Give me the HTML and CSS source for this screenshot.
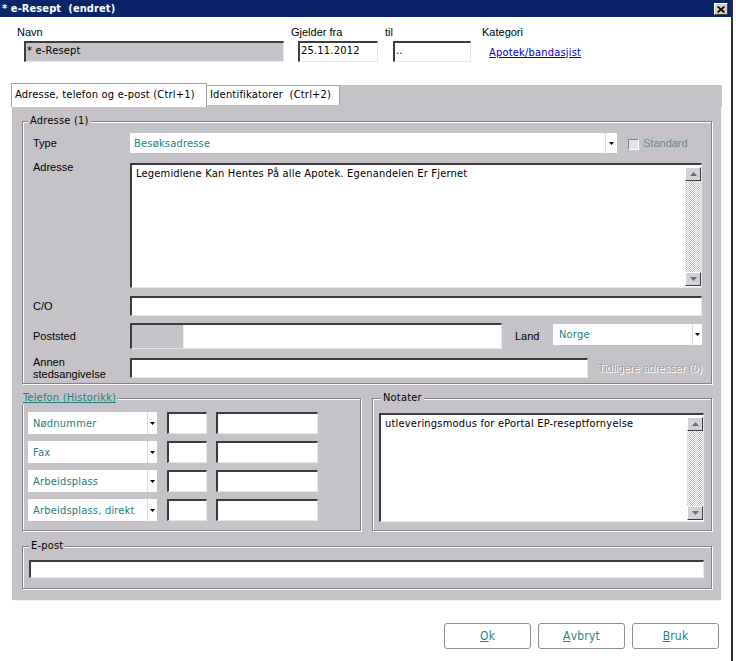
FILE: index.html
```html
<!DOCTYPE html>
<html lang="no">
<head>
<meta charset="utf-8">
<title>e-Resept</title>
<link rel="stylesheet" href="styles.css">
</head>
<body>
<div class="window">
  <div class="titlebar">
    <span class="title">* e-Resept&nbsp; (endret)</span>
    <span class="closebtn"><svg width="8" height="7" viewBox="0 0 8 7"><path d="M0.6 0.5 L7.4 6.5 M7.4 0.5 L0.6 6.5" stroke="#000" stroke-width="1.7"/></svg></span>
  </div>

  <div class="header">
    <div class="hfield f-navn"><span class="hlbl ms">Navn</span><div class="sunken hbox ro">* e-Resept</div></div>
    <div class="hfield f-fra"><span class="hlbl ms">Gjelder fra</span><div class="sunken hbox">25.11.2012</div></div>
    <div class="hfield f-til"><span class="hlbl ms">til</span><div class="sunken hbox">..</div></div>
    <div class="hfield f-kat"><span class="hlbl ms">Kategori</span><a class="link" href="#">Apotek/bandasjist</a></div>
  </div>

  <div class="tabctl">
    <div class="tabstrip">
      <div class="tab active">Adresse, telefon og e-post (Ctrl+1)</div>
      <div class="tab inactive">Identifikatorer&nbsp; (Ctrl+2)</div>
    </div>
    <div class="tabpanel">
      <fieldset class="group g-addr">
        <legend>Adresse (1)</legend>
        <div class="gbody addr">
          <div class="row r-type">
            <span class="rl ms">Type</span>
            <div class="combo c-type"><span class="cv">Besøksadresse</span><span class="cbtn"><svg width="5" height="3" viewBox="0 0 5 3"><path d="M0 0H5L2.5 3Z" fill="#000"/></svg></span></div>
            <span class="chk"></span><span class="chklbl ms">Standard</span>
          </div>
          <div class="row r-adr">
            <span class="rl ms top">Adresse</span>
            <div class="sunken memo m-adr">
              <div class="memotext">Legemidlene Kan Hentes På alle Apotek. Egenandelen Er Fjernet</div>
              <div class="vscroll">
                <span class="sbtn up"><svg width="7" height="4" viewBox="0 0 7 4"><path d="M3.5 0L7 4H0Z" fill="#6e6c70"/></svg></span>
                <span class="strack"></span>
                <span class="sbtn down"><svg width="7" height="4" viewBox="0 0 7 4"><path d="M0 0H7L3.5 4Z" fill="#6e6c70"/></svg></span>
              </div>
            </div>
          </div>
          <div class="row r-co">
            <span class="rl ms">C/O</span>
            <div class="sunken fld"></div>
          </div>
          <div class="row r-post">
            <span class="rl ms mid">Poststed</span>
            <div class="sunken postbox"><span class="postnr"></span><span class="postsw"></span></div>
            <span class="landlbl ms">Land</span>
            <div class="combo c-land"><span class="cv">Norge</span><span class="cbtn"><svg width="5" height="3" viewBox="0 0 5 3"><path d="M0 0H5L2.5 3Z" fill="#000"/></svg></span></div>
          </div>
          <div class="row r-annen">
            <span class="rl ms two">Annen<br>stedsangivelse</span>
            <div class="sunken fld"></div>
            <span class="tidl ms">Tidligere adresser (0)</span>
          </div>
        </div>
      </fieldset>

      <div class="grow2">
        <fieldset class="group g-tel">
          <legend class="tlegend">Telefon (Historikk)</legend>
          <div class="gbody tel">
            <div class="trow">
              <div class="combo c-tel"><span class="cv">Nødnummer</span><span class="cbtn"><svg width="5" height="3" viewBox="0 0 5 3"><path d="M0 0H5L2.5 3Z" fill="#000"/></svg></span></div>
              <div class="sunken tsmall"></div><div class="sunken tbig"></div>
            </div>
            <div class="trow">
              <div class="combo c-tel"><span class="cv">Fax</span><span class="cbtn"><svg width="5" height="3" viewBox="0 0 5 3"><path d="M0 0H5L2.5 3Z" fill="#000"/></svg></span></div>
              <div class="sunken tsmall"></div><div class="sunken tbig"></div>
            </div>
            <div class="trow">
              <div class="combo c-tel"><span class="cv">Arbeidsplass</span><span class="cbtn"><svg width="5" height="3" viewBox="0 0 5 3"><path d="M0 0H5L2.5 3Z" fill="#000"/></svg></span></div>
              <div class="sunken tsmall"></div><div class="sunken tbig"></div>
            </div>
            <div class="trow">
              <div class="combo c-tel"><span class="cv">Arbeidsplass, direkt</span><span class="cbtn"><svg width="5" height="3" viewBox="0 0 5 3"><path d="M0 0H5L2.5 3Z" fill="#000"/></svg></span></div>
              <div class="sunken tsmall"></div><div class="sunken tbig"></div>
            </div>
          </div>
        </fieldset>

        <fieldset class="group g-not">
          <legend class="nlegend">Notater</legend>
          <div class="gbody not">
            <div class="sunken memo m-not">
              <div class="memotext">utleveringsmodus for ePortal EP-reseptfornyelse</div>
              <div class="vscroll">
                <span class="sbtn up"><svg width="7" height="4" viewBox="0 0 7 4"><path d="M3.5 0L7 4H0Z" fill="#6e6c70"/></svg></span>
                <span class="strack"></span>
                <span class="sbtn down"><svg width="7" height="4" viewBox="0 0 7 4"><path d="M0 0H7L3.5 4Z" fill="#6e6c70"/></svg></span>
              </div>
            </div>
          </div>
        </fieldset>
      </div>

      <fieldset class="group g-mail">
        <legend class="mlegend">E-post</legend>
        <div class="gbody mail">
          <div class="sunken mfld"></div>
        </div>
      </fieldset>
    </div>
  </div>

  <div class="buttons">
    <span class="btn"><u>O</u>k</span>
    <span class="btn"><u>A</u>vbryt</span>
    <span class="btn"><u>B</u>ruk</span>
  </div>
</div>
</body>
</html>
```

FILE: styles.css
```css
* { box-sizing: border-box; }
html, body { margin: 0; padding: 0; }
body {
  width: 736px;
  height: 661px;
  overflow: hidden;
  background: #fff;
  font-family: "DejaVu Sans Condensed", "DejaVu Sans", sans-serif;
  font-size: 11px;
  letter-spacing: 0.2px;
  color: #000;
}
.ms {
  font-family: "Liberation Sans", Arial, sans-serif;
  letter-spacing: 0;
}

.window {
  width: 733px;
  height: 661px;
  border-right: 2px solid #303030;
  display: flex;
  flex-direction: column;
  background: #fff;
}

/* title bar */
.titlebar {
  height: 17px;
  background: #0a246a;
  display: flex;
  align-items: center;
  justify-content: space-between;
  padding: 0 3px 0 2px;
}
.title {
  color: #fff;
  font-weight: bold;
  white-space: pre;
  letter-spacing: 0.1px;
}
.closebtn {
  width: 14px;
  height: 12px;
  background: #d4d0c8;
  border: 1px solid;
  border-color: #fff #404040 #404040 #fff;
  display: flex;
  align-items: center;
  justify-content: center;
  margin-top: 1px;
}

/* header fields */
.header {
  display: flex;
  padding: 8px 0 0 17px;
}
.hfield { display: flex; flex-direction: column; }
.hlbl { height: 14px; line-height: 14px; }
.sunken {
  background: #fff;
  border-style: solid;
  border-width: 2px 1px 1px 2px;
  border-color: #3c3c3c #e6e6e6 #e6e6e6 #3c3c3c;
}
.hbox {
  height: 21px;
  margin-top: 2px;
  line-height: 16px;
  padding-left: 1px;
  white-space: nowrap;
}
.hbox.ro { background: #c5c3c7; }
.f-navn { width: 274px; }
.f-navn .hbox { margin-left: 7px; width: 260px; }
.f-fra { width: 94px; }
.f-fra .hbox { margin-left: 7px; width: 80px; }
.f-til { width: 97px; }
.f-til .hbox { margin-left: 8px; width: 78px; }
.link {
  margin: 7px 0 0 7px;
  line-height: 14px;
  color: #0000cc;
  text-decoration: underline;
}

/* tab control */
.tabctl {
  margin: 21px 0 0 12px;
  width: 710px;
}
.tabstrip {
  display: flex;
  height: 24px;
  background: linear-gradient(#fff 0 2px, #c5c3c7 2px);
}
.tab {
  background: #fff;
  border: 1px solid #a3a1a5;
  border-bottom: none;
  white-space: pre;
  line-height: 14px;
}
.tab.active {
  height: 24px;
  width: 196px;
  margin-left: -1px;
  padding: 4px 0 0 3px;
}
.tab.inactive {
  height: 20px;
  width: 133px;
  margin-top: 2px;
  border-left: none;
  padding: 2px 0 0 3px;
}
.tabpanel {
  background: #c5c3c7;
  padding: 7px 9px 11px 10px;
  border-right: 1px solid #f2f2f2;
  border-bottom: 1px solid #f2f2f2;
}

/* group boxes */
.group {
  margin: 0;
  padding: 0;
  min-width: 0;
  border: 1px solid #858387;
  box-shadow: inset 1px 1px 0 #fff, 1px 1px 0 #fff;
}
.group legend {
  padding: 0 2px;
  margin-left: 5px;
  height: 14px;
  line-height: 14px;
  background: #c5c3c7;
}
.group legend.tlegend {
  margin-left: -1px;
  padding: 0 2px 0 1px;
  color: #1f7d7d;
  text-decoration: underline;
}
.group legend.nlegend { margin-left: 8px; }
.group legend.mlegend { margin-left: 6px; }

.gbody.addr {
  padding: 5px 9px 5px 10px;
  display: flex;
  flex-direction: column;
}
.row { display: flex; align-items: center; }
.rl {
  width: 97px;
  flex: none;
  line-height: 12px;
}
.rl.top { align-self: flex-start; margin-top: -2px; }
.rl.mid { align-self: center; }
.rl.two { line-height: 12px; }

.combo {
  display: flex;
  background: #fff;
  color: #1f7d7d;
}
.combo .cv {
  flex: 1;
  white-space: nowrap;
  overflow: hidden;
  display: flex;
  align-items: center;
}
.combo .cbtn {
  flex: none;
  border-left: 1px solid #dcdcdc;
  display: flex;
  align-items: center;
  justify-content: center;
}

.r-type { height: 20px; }
.c-type { width: 487px; height: 20px; }
.c-type .cv { padding-left: 4px; }
.c-type .cbtn { width: 12px; }
.chk {
  width: 11px;
  height: 11px;
  margin: 2px 0 0 11px;
  background: #e4e3e5;
  border: 1px solid;
  border-color: #858387 #fff #fff #858387;
}
.chklbl { margin-left: 4px; color: #5f8f8f; }

.r-adr { margin-top: 10px; align-items: flex-start; }
.memo { display: flex; }
.m-adr { flex: 1; height: 125px; }
.memotext {
  flex: 1;
  padding: 2px 4px;
  line-height: 14px;
}
.vscroll {
  width: 16px;
  flex: none;
  display: flex;
  flex-direction: column;
  padding: 2px 0 1px;
}
.sbtn {
  height: 14px;
  flex: none;
  background: #d4d2d6;
  border: 1px solid;
  border-color: #fff #3c3c3c #3c3c3c #fff;
  display: flex;
  align-items: center;
  justify-content: center;
}
.strack {
  flex: 1;
  background: repeating-conic-gradient(#c5c3c7 0 25%, #fff 0 50%) 0 0 / 2px 2px;
}

.r-co { margin-top: 8px; height: 20px; }
.fld { flex: 1; height: 20px; }

.r-post { margin-top: 7px; height: 26px; align-items: flex-start; }
.postbox {
  width: 372px;
  height: 26px;
  flex: none;
  display: flex;
}
.postnr {
  width: 52px;
  background: #c5c3c7;
  border-right: 1px solid #f0f0f0;
}
.postsw { flex: 1; background: #fff; }
.landlbl {
  width: 38px;
  margin-left: 13px;
  align-self: center;
}
.c-land { flex: 1; height: 21px; margin-top: 1px; }
.c-land .cv { padding-left: 6px; }
.c-land .cbtn { width: 10px; }

.r-annen { margin-top: 9px; height: 20px; }
.tidl {
  margin-left: 10px;
  color: #a3a1a5;
  text-shadow: 1px 1px 0 #fff;
}

/* phone + notes row */
.grow2 {
  display: flex;
  gap: 11px;
  margin-top: 7px;
}
.g-tel { width: 339px; flex: none; }
.g-not { flex: 1; }
.gbody.tel {
  padding: 7px 0 9px 5px;
  display: flex;
  flex-direction: column;
  gap: 7px;
}
.trow { display: flex; height: 22px; }
.c-tel { width: 129px; height: 22px; }
.c-tel .cv { padding-left: 5px; }
.c-tel .cbtn { width: 10px; }
.tsmall { width: 40px; margin-left: 10px; }
.tbig { width: 102px; margin-left: 9px; }

.gbody.not { padding: 8px 7px 8px 6px; }
.m-not { height: 109px; }

/* e-mail */
.g-mail { margin-top: 8px; }
.gbody.mail { padding: 7px 7px 10px 6px; }
.mfld { height: 18px; }

/* buttons */
.buttons {
  display: flex;
  justify-content: flex-end;
  gap: 7px;
  padding: 22px 12px 0 0;
}
.btn {
  width: 87px;
  height: 26px;
  border: 1px solid #8e8c90;
  border-radius: 3px;
  background: #fff;
  color: #2a7f7f;
  display: flex;
  align-items: center;
  justify-content: center;
  font-size: 12px;
}
.btn u { text-decoration: underline; }
```
